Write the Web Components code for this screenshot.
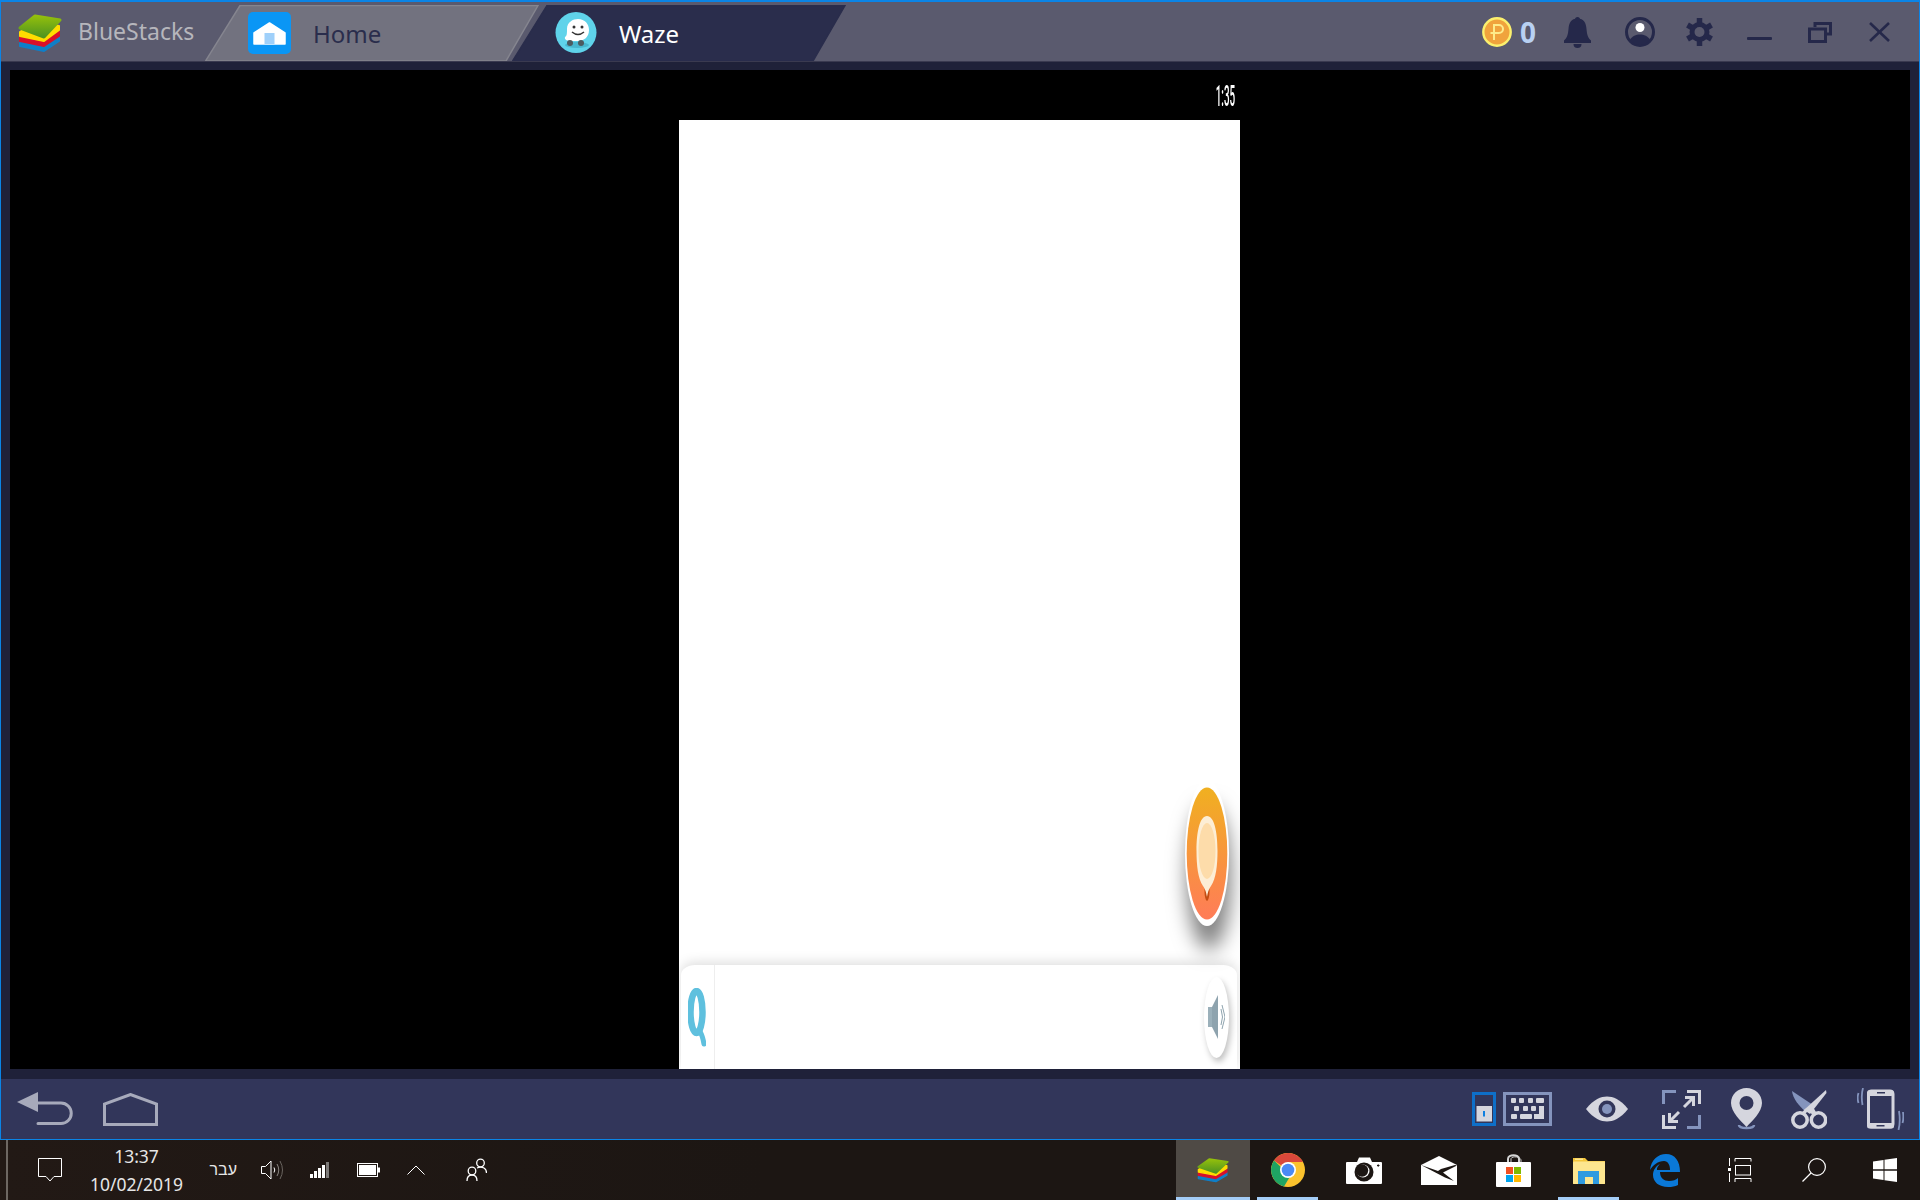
<!DOCTYPE html>
<html>
<head>
<meta charset="utf-8">
<title>BlueStacks</title>
<style>
  html, body { margin: 0; padding: 0; background: #1c1613; }
  body { width: 1920px; height: 1200px; overflow: hidden; display: flex; flex-direction: column; font-family: "Noto Sans", sans-serif; }
</style>
</head>
<body>
<bs-window>
  <bs-titlebar slot="title">
    <ui-icon slot="brand" name="bluestacks" w="44" h="39"></ui-icon>
    <bs-tab slot="tabs" kind="home" label="Home"><ui-icon name="homeapp" w="43" h="42"></ui-icon></bs-tab>
    <bs-tab slot="tabs" kind="app" label="Waze"><ui-icon name="waze" w="42" h="41"></ui-icon></bs-tab>
    <ui-icon slot="controls" name="coin" w="30" h="30"></ui-icon>
    <bs-count slot="controls" style="margin-left:8px">0</bs-count>
    <ui-icon slot="controls" name="bell" w="27" h="31" style="margin-left:29px"></ui-icon>
    <ui-icon slot="controls" name="user" w="30" h="30" style="margin-left:34px"></ui-icon>
    <ui-icon slot="controls" name="gear" w="27" h="28" style="margin-left:31px"></ui-icon>
    <ui-icon slot="controls" name="minimize" w="25" h="30" style="margin-left:34px"></ui-icon>
    <ui-icon slot="controls" name="restore" w="24" h="21" style="margin-left:36px"></ui-icon>
    <ui-icon slot="controls" name="close" w="21" h="20" style="margin-left:37px"></ui-icon>
  </bs-titlebar>
  <bs-stage slot="stage">
    <android-phone time="1:35"></android-phone>
  </bs-stage>
  <bs-toolbar slot="toolbar">
    <ui-icon slot="left" name="back" w="56" h="34"></ui-icon>
    <ui-icon slot="left" name="androidhome" w="55" h="33" style="margin-left:30px"></ui-icon>
    <ui-icon slot="right" name="switch" w="24" h="34"></ui-icon>
    <ui-icon slot="right" name="keyboard" w="49" h="34" style="margin-left:7px"></ui-icon>
    <ui-icon slot="right" name="eye" w="42" h="26" style="margin-left:34px"></ui-icon>
    <ui-icon slot="right" name="expand" w="39" h="39" style="margin-left:34px"></ui-icon>
    <ui-icon slot="right" name="pin" w="31" h="42" style="margin-left:30px"></ui-icon>
    <ui-icon slot="right" name="scissors" w="36" h="39" style="margin-left:29px"></ui-icon>
    <ui-icon slot="right" name="shake" w="47" h="42" style="margin-left:30px"></ui-icon>
  </bs-toolbar>
</bs-window>
<win-taskbar>
  <ui-icon slot="tray" name="message" w="24" h="24" style="margin-left:30px"></ui-icon>
  <win-clock slot="tray" style="margin-left:28px"></win-clock>
  <win-lang slot="tray" style="margin-left:24px">עבר</win-lang>
  <ui-icon slot="tray" name="speaker" w="23" h="22" style="margin-left:24px"></ui-icon>
  <ui-icon slot="tray" name="signal" w="19" h="16" style="margin-left:26px"></ui-icon>
  <ui-icon slot="tray" name="battery" w="23" h="14" style="margin-left:28px"></ui-icon>
  <ui-icon slot="tray" name="chevron" w="18" h="10" style="margin-left:27px"></ui-icon>
  <ui-icon slot="tray" name="people" w="21" h="24" style="margin-left:41px"></ui-icon>

  <task-item slot="apps" active running style="width:74px"><ui-icon name="bluestacks" w="32" h="25"></ui-icon></task-item>
  <task-item slot="apps" running style="width:76px"><ui-icon name="chrome" w="34" h="34"></ui-icon></task-item>
  <task-item slot="apps" style="width:75px"><ui-icon name="camera" w="36" h="27"></ui-icon></task-item>
  <task-item slot="apps" style="width:75px"><ui-icon name="mail" w="36" h="29"></ui-icon></task-item>
  <task-item slot="apps" style="width:75px"><ui-icon name="store" w="35" h="33"></ui-icon></task-item>
  <task-item slot="apps" running style="width:76px"><ui-icon name="explorer" w="32" h="27"></ui-icon></task-item>
  <task-item slot="apps" style="width:75px"><ui-icon name="edge" w="30" h="33"></ui-icon></task-item>
  <task-item slot="apps" style="width:76px"><ui-icon name="taskview" w="24" h="24"></ui-icon></task-item>
  <task-item slot="apps" style="width:71px"><ui-icon name="search" w="24" h="24"></ui-icon></task-item>
  <task-item slot="apps" style="width:71px"><ui-icon name="windows" w="24" h="24"></ui-icon></task-item>
</win-taskbar>

<script>
// light and blue-grey fills shared by the toolbar icons
const LT = "#d5d6de";
const BG = "#8494bd";
const BAR = "#32365a";
const NAVY = "#25284a";

const ICONS = {
  bluestacks: (w, h) => `
    <svg viewBox="0 0 44 39" width="${w}" height="${h}" preserveAspectRatio="none">
      <defs><linearGradient id="g" x1="0" y1="0" x2="0" y2="1"><stop offset="0" stop-color="#93bf0c"/><stop offset="1" stop-color="#4f9420"/></linearGradient></defs>
      <path d="M2 29 L17 18 L41 23 L41 27 L26 37 L2 32 Z" fill="#0f7fc8" stroke="#0f7fc8" stroke-width="2" stroke-linejoin="round"/>
      <path d="M2 23 L17 13 L41 18 L41 22 L26 32 L2 27 Z" fill="#d9102a" stroke="#d9102a" stroke-width="2" stroke-linejoin="round"/>
      <path d="M2 18 L17 8 L41 12 L41 16 L26 27 L2 22 Z" fill="#ffdd00" stroke="#ffdd00" stroke-width="2" stroke-linejoin="round"/>
      <path d="M2 14 L17 2 L42 6 L26 23 Z" fill="url(#g)" stroke="url(#g)" stroke-width="3" stroke-linejoin="round"/>
    </svg>`,
  homeapp: () => `
    <svg viewBox="0 0 43 42" width="43" height="42">
      <rect width="43" height="42" rx="5" fill="#0a96f5"/>
      <path d="M6 21 L21.500 11 L37 21 V32 H6 Z" fill="#fff" stroke="#fff" stroke-linejoin="round" stroke-width="1.500"/>
      <rect x="16.500" y="21" width="10" height="11" fill="#9fd0fa"/>
    </svg>`,
  waze: () => `
    <svg viewBox="0 0 42 41" width="42" height="41">
      <circle cx="21" cy="20.500" r="20.500" fill="#5fd3ea"/>
      <ellipse cx="22" cy="33" rx="12" ry="3" fill="#47b6cf"/>
      <path d="M10 25 C12 24 12 21 12 17 C12 10 18 7 23 7 C30 7 34 12 34 18 C34 25 29 29 23 29 H16 C13 29 9 28 10 25 Z" fill="#fff"/>
      <circle cx="19" cy="15" r="1.500" fill="#333"/><circle cx="27" cy="15" r="1.500" fill="#333"/>
      <path d="M17 20 Q23 25 29 20" fill="none" stroke="#333" stroke-width="1.500"/>
      <circle cx="15" cy="31" r="3" fill="#4c5a60"/><circle cx="26" cy="31" r="3" fill="#4c5a60"/>
    </svg>`,
  coin: () => `
    <svg viewBox="0 0 30 30" width="30" height="30">
      <circle cx="15" cy="15" r="13.700" fill="#f0a33c" stroke="#fbf06e" stroke-width="2.400"/>
      <path d="M12 23 V8 H17 A4 4 0 0 1 17 16 H8.500" fill="none" stroke="#fdeb8a" stroke-width="2"/>
    </svg>`,
  bell: () => `
    <svg viewBox="0 0 27 31" width="27" height="31" fill="${NAVY}">
      <circle cx="13.500" cy="2.500" r="2.500"/>
      <path d="M13.500 1.500 C20 1.500 22 6 22.500 12 C23 18 24 21 27 23.500 V26 H0 V23.500 C3 21 4 18 4.500 12 C5 6 7 1.500 13.500 1.500 Z"/>
      <path d="M9.500 27 H17.500 A4 4 0 0 1 9.500 27 Z"/>
    </svg>`,
  user: () => `
    <svg viewBox="0 0 30 30" width="30" height="30">
      <circle cx="15" cy="15" r="13.500" fill="none" stroke="${NAVY}" stroke-width="3"/>
      <circle cx="15" cy="10.500" r="4.500" fill="#fff"/>
      <path d="M5 23 C7 19 11 17.500 15 17.500 C19 17.500 23 19 25 23 C22 27 18 28 15 28 C12 28 8 27 5 23 Z" fill="${NAVY}"/>
    </svg>`,
  gear: () => `
    <svg viewBox="0 0 27 28" width="27" height="28">
      <g stroke="${NAVY}" stroke-width="5.500">
        <line x1="13.500" y1="0" x2="13.500" y2="28"/>
        <line x1="1.500" y1="7" x2="25.500" y2="21"/>
        <line x1="25.500" y1="7" x2="1.500" y2="21"/>
      </g>
      <circle cx="13.500" cy="14" r="10" fill="${NAVY}"/>
      <circle cx="13.500" cy="14" r="5" fill="#5a5a6e"/>
    </svg>`,
  minimize: () => `<svg viewBox="0 0 25 30" width="25" height="30"><rect x="0" y="20" width="25" height="3" rx="1" fill="${NAVY}"/></svg>`,
  restore: () => `
    <svg viewBox="0 0 24 21" width="24" height="21" fill="none" stroke="${NAVY}" stroke-width="3">
      <path d="M7 5 V1.500 H22.500 V12 H18"/>
      <rect x="1.500" y="7" width="16" height="12.500"/>
    </svg>`,
  close: () => `
    <svg viewBox="0 0 21 20" width="21" height="20" stroke="${NAVY}" stroke-width="2.600">
      <line x1="1" y1="1" x2="20" y2="19"/><line x1="20" y1="1" x2="1" y2="19"/>
    </svg>`,
  back: () => `
    <svg viewBox="0 0 56 34" width="56" height="34">
      <path d="M21 11 H44 A10.250 10.250 0 0 1 44 31.500 H21" fill="none" stroke="#a7aabb" stroke-width="3" stroke-linecap="round"/>
      <path d="M0 10 L21 0 V20 Z" fill="#a7aabb"/>
    </svg>`,
  androidhome: () => `
    <svg viewBox="0 0 55 33" width="55" height="33">
      <path d="M1.500 31.500 V11 L27.500 1.500 L53.500 11 V31.500 Z" fill="none" stroke="#a7aabb" stroke-width="3"/>
    </svg>`,
  switch: () => `
    <svg viewBox="0 0 24 34" width="24" height="34">
      <rect x="1.500" y="1.500" width="21" height="31" fill="none" stroke="#0e6fc8" stroke-width="3"/>
      <rect x="4.500" y="14" width="15.500" height="15.500" fill="${LT}"/>
      <rect x="11" y="19" width="2" height="5.500" fill="#0e7fe0"/>
    </svg>`,
  keyboard: () => `
    <svg viewBox="0 0 49 34" width="49" height="34" fill="${LT}">
      <rect x="1.500" y="1.500" width="46" height="31" fill="none" stroke="${BG}" stroke-width="3"/>
      <rect x="8" y="6" width="5" height="5" rx="1"/><rect x="16" y="6" width="5" height="5" rx="1"/><rect x="25" y="6" width="5" height="5" rx="1"/><rect x="33" y="6" width="8" height="5" rx="1"/>
      <rect x="11" y="14" width="5" height="5" rx="1"/><rect x="20" y="14" width="5" height="5" rx="1"/><rect x="28" y="14" width="5" height="5" rx="1"/>
      <rect x="8" y="22" width="6" height="5" rx="1"/><rect x="17" y="22" width="12" height="5" rx="1"/>
      <path d="M36 14 H41 V27 H31 V22 H36 Z"/>
    </svg>`,
  eye: () => `
    <svg viewBox="0 0 42 26" width="42" height="26">
      <path d="M0 13 C8 3 15 0.500 21 0.500 C27 0.500 34 3 42 13 C34 23 27 25.500 21 25.500 C15 25.500 8 23 0 13 Z" fill="${LT}"/>
      <circle cx="21" cy="13" r="8.500" fill="${BAR}"/>
      <circle cx="21" cy="13" r="5" fill="${BG}"/>
    </svg>`,
  expand: () => `
    <svg viewBox="0 0 39 39" width="39" height="39" fill="none" stroke-width="3">
      <path d="M14 1.500 H1.500 V14" stroke="${BG}"/>
      <path d="M25 1.500 H37.500 V14" stroke="${LT}"/>
      <path d="M1.500 25 V37.500 H14" stroke="${LT}"/>
      <path d="M37.500 25 V37.500 H25" stroke="${BG}"/>
      <path d="M22 17 L31 8 M23 7.500 H31.500 V16" stroke="${LT}"/>
      <path d="M17 22 L8 31 M16 31.500 H7.500 V23" stroke="${LT}"/>
    </svg>`,
  pin: () => `
    <svg viewBox="0 0 31 42" width="31" height="42">
      <path d="M8 37 C8 41 23 41 23 37" fill="none" stroke="${BG}" stroke-width="2.500"/>
      <path d="M15.500 0 C24 0 31 6.500 31 15 C31 24 21 33 15.500 39 C10 33 0 24 0 15 C0 6.500 7 0 15.500 0 Z" fill="${LT}"/>
      <circle cx="15.500" cy="15" r="7" fill="${BAR}"/>
    </svg>`,
  scissors: () => `
    <svg viewBox="0 0 36 39" width="36" height="39">
      <path d="M1 1 L22 15 L15 22 C8 16 2 9 1 1 Z" fill="${BG}"/>
      <path d="M35 0 L35.500 3 L19 24 L13 20 Z" fill="${LT}"/>
      <path d="M14 19 L21 15 L26 24 L23.500 26 Z M17 21 L13 25 L10.500 23 L14 19 Z" fill="${LT}"/>
      <circle cx="9" cy="30" r="7.200" fill="none" stroke="${LT}" stroke-width="3.500"/>
      <circle cx="27.500" cy="30" r="7.200" fill="none" stroke="${LT}" stroke-width="3.500"/>
    </svg>`,
  shake: () => `
    <svg viewBox="0 0 47 42" width="47" height="42" fill="none">
      <rect x="11.500" y="3" width="24.500" height="36" rx="3" stroke="${LT}" stroke-width="3" fill="${BAR}"/>
      <rect x="10" y="2" width="27" height="6" rx="3" fill="${LT}"/>
      <rect x="20" y="4" width="8" height="1.500" fill="${BAR}"/>
      <rect x="10" y="35" width="27" height="5.500" rx="2.500" fill="${LT}"/>
      <rect x="19.500" y="37" width="8" height="1.500" fill="${BAR}"/>
      <path d="M6 0 C4.500 5 4.500 11 5.500 17 M1.500 5 C0.500 8 0.500 12 1.500 15" stroke="${BG}" stroke-width="1.800"/>
      <path d="M41.500 42 C43 36 43 29 42 23 M46 24 C46.500 28 46.500 32 45.500 35" stroke="${BG}" stroke-width="1.800"/>
    </svg>`,
  message: () => `
    <svg viewBox="0 0 24 24" width="24" height="24" fill="none" stroke="#fff" stroke-width="1">
      <path d="M0.500 0.500 H23.500 V18.500 H16 L12 23 L8 18.500 H0.500 Z"/>
    </svg>`,
  speaker: () => `
    <svg viewBox="0 0 23 22" width="23" height="22" fill="none" stroke="#fff" stroke-width="1">
      <path d="M0.500 7.500 H4.500 L10 2 V20 L4.500 14.500 H0.500 Z"/>
      <path d="M13 8.500 Q14.500 11 13 13.500" />
      <path d="M16 5 Q19.500 11 16 17" stroke="#8a8580"/>
      <path d="M19 2 Q24 11 19 20" stroke="#6a6560"/>
    </svg>`,
  signal: () => `
    <svg viewBox="0 0 19 16" width="19" height="16" fill="#fff">
      <rect x="0" y="12" width="3" height="4"/><rect x="4" y="9" width="3" height="7"/><rect x="8" y="6" width="3" height="10"/><rect x="12" y="3" width="3" height="13"/><rect x="16" y="0" width="3" height="16" fill="#7d7a78"/>
    </svg>`,
  battery: () => `
    <svg viewBox="0 0 23 14" width="23" height="14">
      <rect x="0.500" y="0.500" width="20" height="13" fill="none" stroke="#fff"/>
      <rect x="2" y="2" width="17" height="10" fill="#fff"/>
      <rect x="21" y="4.500" width="2" height="5" fill="#fff"/>
    </svg>`,
  chevron: () => `<svg viewBox="0 0 18 10" width="18" height="10" fill="none" stroke="#fff"><path d="M0.500 9.500 L9 1 L17.500 9.500"/></svg>`,
  people: () => `
    <svg viewBox="0 0 21 24" width="21" height="24" fill="none" stroke="#fff" stroke-width="1.300">
      <circle cx="14.500" cy="5" r="3.800"/>
      <circle cx="6" cy="13" r="3.800"/>
      <path d="M1 23 C1 19 3 17 6 17 C9 17 11 19 11 23"/>
      <path d="M11 10 C13 9 16 9 18 10 C20 11 20.500 13 20.500 15"/>
    </svg>`,
  chrome: () => `
    <svg viewBox="0 0 34 34" width="34" height="34">
      <circle cx="17" cy="17" r="17" fill="#fbc22d"/>
      <path d="M17 17 L3 7.500 A17 17 0 0 1 32 9 L17 9 Z" fill="#d9483b"/>
      <path d="M3 7.500 A17 17 0 0 0 13 33.500 L20.500 21 L13 17 Z" fill="#1fa463"/>
      <circle cx="17" cy="17" r="8" fill="#fff"/>
      <circle cx="17" cy="17" r="6.300" fill="#4b8af5"/>
    </svg>`,
  camera: () => `
    <svg viewBox="0 0 36 27" width="36" height="27">
      <path d="M1 5 H11 L13 0.500 H24 L26 5 H35 A1 1 0 0 1 36 6 V26 A1 1 0 0 1 35 27 H1 A1 1 0 0 1 0 26 V6 A1 1 0 0 1 1 5 Z" fill="#fff"/>
      <circle cx="18" cy="15" r="9.500" fill="#1c1613"/>
      <circle cx="17" cy="14" r="6.500" fill="#fff"/>
      <circle cx="16" cy="13.500" r="6.200" fill="#1c1613"/>
      <rect x="31" y="8" width="2.500" height="1" fill="#1c1613"/><rect x="31.700" y="7.300" width="1" height="2.500" fill="#1c1613"/>
    </svg>`,
  mail: () => `
    <svg viewBox="0 0 36 29" width="36" height="29">
      <path d="M0 9 L18 0 L36 9 V29 H0 Z" fill="#fff"/>
      <path d="M0 9 L24 21.500 L33 25 L22 16.500 L36 9.500 L34 9 L20 13 L17 15 Z" fill="#1c1613"/>
    </svg>`,
  store: () => `
    <svg viewBox="0 0 35 33" width="35" height="33">
      <path d="M12 9 V5 C12 0 23 0 23 5 V9" fill="none" stroke="#d5d5d5" stroke-width="2"/>
      <path d="M15 9 V5 C15 2 24 2 25 6 V9" fill="none" stroke="#d5d5d5" stroke-width="1"/>
      <rect x="0" y="8" width="35" height="25" rx="1" fill="#fff"/>
      <rect x="10" y="13" width="7" height="7" fill="#f25022"/><rect x="18" y="13" width="7" height="7" fill="#7fba00"/>
      <rect x="10" y="21" width="7" height="7" fill="#00a4ef"/><rect x="18" y="21" width="7" height="7" fill="#ffb900"/>
    </svg>`,
  explorer: () => `
    <svg viewBox="0 0 32 27" width="32" height="27">
      <path d="M0 1 H12 L15 4 H32 V27 H0 Z" fill="#f4c63a"/>
      <rect x="0" y="4.500" width="32" height="22.500" rx="1" fill="#fde68f"/>
      <rect x="2" y="1.500" width="8" height="1.500" fill="#fde68f"/>
      <path d="M5 14 H26 V27 H20 V20 H12 V27 H5 Z" fill="#2f9be0"/>
    </svg>`,
  edge: () => `
    <svg viewBox="0 0 30 33" width="30" height="33">
      <path d="M0 16 C1 6 8 0 16 0 C25 0 30 7 30 18 H10 C10 24 14 27 19 27 C23 27 26 26 28 24 V31 C25 32.500 22 33 18 33 C9 33 3 28 3 21 C3 16 6 12 10 10 C7 13 7 14 7 16 L20 16 C20 11 18 7 14 7 C8 7 3 11 0 16 Z" fill="#0a78d7"/>
    </svg>`,
  taskview: () => `
    <svg viewBox="0 0 24 24" width="24" height="24" fill="none" stroke="#fff">
      <path d="M7 0.500 H23 M7 3.500 V0.500 M23 0.500 V3.500"/>
      <rect x="7.500" y="7.500" width="15" height="9.500"/>
      <path d="M7 24 V20.500 H23 V24"/>
      <rect x="0" y="10" width="3" height="3" fill="#fff" stroke="none"/>
      <path d="M1.500 0 V8 M1.500 15 V24" />
    </svg>`,
  search: () => `
    <svg viewBox="0 0 24 24" width="24" height="24" fill="none" stroke="#fff" stroke-width="1.200">
      <circle cx="15" cy="9" r="8.400"/>
      <line x1="9" y1="15" x2="0.500" y2="23.500"/>
    </svg>`,
  windows: () => `
    <svg viewBox="0 0 24 24" width="24" height="24" fill="#fff">
      <path d="M0 3.500 L10.500 2 V11.300 H0 Z M11.500 1.800 L24 0 V11.300 H11.500 Z M0 12.700 H10.500 V22 L0 20.500 Z M11.500 12.700 H24 V24 L11.500 22.200 Z"/>
    </svg>`,
  q: () => `
    <svg viewBox="0 0 18 59" width="18" height="59" fill="none" stroke="#5fc0de" stroke-linecap="round">
      <ellipse cx="8.500" cy="24" rx="6" ry="21" stroke-width="6.500"/>
      <path d="M11 42 C14 46 15 50 16 56" stroke-width="5"/>
    </svg>`,
  sound: () => `
    <svg viewBox="0 0 17 44" width="17" height="44">
      <rect x="0" y="12" width="4" height="20" fill="#9bb0ba"/>
      <path d="M4 12 L10 0 V44 L4 32 Z" fill="#8ea3ae"/>
      <path d="M13 14 Q16 22 13 30 M14 10 L17 22 L14 34" fill="none" stroke="#8ea3ae" stroke-width="1"/>
    </svg>`,
  fab: () => `
    <svg viewBox="0 0 44 145" width="44" height="145">
      <defs><linearGradient id="o" x1="0" y1="0" x2="0" y2="1"><stop offset="0" stop-color="#f0b020"/><stop offset="1" stop-color="#ff7c58"/></linearGradient></defs>
      <ellipse cx="22" cy="72.500" rx="22" ry="72.500" fill="#fff"/>
      <ellipse cx="22" cy="72.500" rx="20.300" ry="66" fill="url(#o)"/>
      <ellipse cx="22" cy="110" rx="2.500" ry="10" fill="#c34c12"/>
      <path d="M22 116 C21 110 20 108 18 105 C13 98 11.500 84 11.500 70 C11.500 50 15 35 22 35 C29 35 32.500 50 32.500 70 C32.500 84 31 98 26 105 C24 108 23 110 22 116 Z" fill="#fdeed5"/>
      <ellipse cx="22" cy="70" rx="8.500" ry="28" fill="#fddcaa"/>
    </svg>`,
};

class UiIcon extends HTMLElement {
  constructor() {
    super();
    const w = this.getAttribute("w");
    const h = this.getAttribute("h");
    const draw = ICONS[this.getAttribute("name")];
    this.attachShadow({ mode: "open" }).innerHTML = `
      <style>
        :host { display: inline-flex; flex: none; width: ${w}px; height: ${h}px; }
        svg { display: block; }
      </style>
      ${draw(w, h)}`;
  }
}

class BsWindow extends HTMLElement {
  constructor() {
    super();
    this.attachShadow({ mode: "open" }).innerHTML = `
      <style>
        :host {
          display: flex; flex-direction: column; flex: none;
          height: 1140px; box-sizing: border-box;
          border: 1px solid #0a84e6; border-top-width: 2px;
          background: #1f2139;
        }
      </style>
      <slot name="title"></slot>
      <slot name="stage"></slot>
      <slot name="toolbar"></slot>`;
  }
}

class BsTitlebar extends HTMLElement {
  constructor() {
    super();
    this.attachShadow({ mode: "open" }).innerHTML = `
      <style>
        :host {
          display: flex; flex: none; height: 60px; box-sizing: border-box;
          background: #5a5a6e; border-bottom: 1px solid #3a3a50;
        }
        .brand { display: flex; align-items: center; width: 204px; height: 59px; padding-left: 17px; padding-top: 3px; box-sizing: border-box; flex: none; }
        .name { margin-left: 16px; margin-top: -4px; font: 23px "Noto Sans", sans-serif; color: #b6b6bc; }
        .tabs { display: flex; align-items: flex-end; flex: none; }
        .controls { display: flex; align-items: center; margin-left: auto; padding-right: 29px; padding-top: 1px; }
      </style>
      <div class="brand"><slot name="brand"></slot><span class="name">BlueStacks</span></div>
      <div class="tabs"><slot name="tabs"></slot></div>
      <div class="controls"><slot name="controls"></slot></div>`;
  }
}

class BsTab extends HTMLElement {
  constructor() {
    super();
    const isHome = this.getAttribute("kind") === "home";
    const fill = isHome ? "#72727f" : "#2a2d4c";
    const edge = isHome ? "#85858f" : "#2a2d4c";
    const color = isHome ? "#2a2d4c" : "#fff";
    this.attachShadow({ mode: "open" }).innerHTML = `
      <style>
        :host {
          display: flex; align-items: center; position: relative;
          width: 334px; height: 56px; box-sizing: border-box; flex: none;
          margin-right: -27px; padding-left: 43px; padding-bottom: 1px;
          color: ${color}; font: 24px "Noto Sans", sans-serif;
        }
        .shape { position: absolute; inset: 0; }
        ::slotted(ui-icon) { position: relative; }
        span { position: relative; margin-left: 22px; top: 1px; }
      </style>
      <svg class="shape" viewBox="0 0 334 56" width="334" height="56">
        <path d="M0.500 56 L35 0.500 H333 L301 56 Z" fill="${fill}" stroke="${edge}" stroke-width="1.500"/>
      </svg>
      <slot></slot>
      <span>${this.getAttribute("label")}</span>`;
  }
}

class BsCount extends HTMLElement {
  constructor() {
    super();
    this.attachShadow({ mode: "open" }).innerHTML = `
      <style>:host { display: block; width: 15px; font: 700 28px "Noto Sans", sans-serif; color: #b8d0f2; line-height: 30px; }</style>
      <slot></slot>`;
  }
}

class BsStage extends HTMLElement {
  constructor() {
    super();
    this.attachShadow({ mode: "open" }).innerHTML = `
      <style>
        :host { display: flex; flex: none; height: 1017px; box-sizing: border-box; padding: 8px 9px 10px 9px; }
        .screen { flex: 1; background: #000; display: flex; justify-content: center; }
      </style>
      <div class="screen"><slot></slot></div>`;
  }
}

class AndroidPhone extends HTMLElement {
  constructor() {
    super();
    this.attachShadow({ mode: "open" }).innerHTML = `
      <style>
        :host { display: flex; flex-direction: column; width: 561px; height: 999px; flex: none; margin-right: 1px; }
        .status { height: 50px; flex: none; display: flex; justify-content: flex-end; align-items: center; padding-right: 5px; }
        .time { color: #fff; font: 500 29px Roboto, sans-serif; transform: scaleX(0.34); transform-origin: right center; margin-top: 2px; }
        .map { flex: 1; background: #fff; display: flex; flex-direction: column; justify-content: flex-end; overflow: hidden; }
        .fab { align-self: flex-end; display: flex; margin: 0 11px 39px 0; filter: drop-shadow(2px 24px 10px rgba(0,0,0,.5)); }
        .bar { height: 104px; flex: none; display: flex; align-items: center; background: #fff; margin: 0 3px 0 2px; border-radius: 14px 14px 0 0 / 10px 10px 0 0; box-shadow: 0 -3px 12px rgba(0,0,0,.13); }
        .find { width: 34px; align-self: stretch; flex: none; display: flex; align-items: center; padding-left: 7px; box-sizing: border-box; border-right: 1px solid #eee; }
        .mute { margin-left: auto; margin-right: 8px; width: 25px; height: 81px; border-radius: 50%; background: #fff; box-shadow: 2px 4px 6px rgba(0,0,0,.25); display: flex; align-items: center; justify-content: center; }
      </style>
      <div class="status"><span class="time">${this.getAttribute("time")}</span></div>
      <div class="map">
        <div class="fab"><ui-icon name="fab" w="44" h="145"></ui-icon></div>
        <div class="bar">
          <div class="find"><ui-icon name="q" w="18" h="59"></ui-icon></div>
          <div class="mute"><ui-icon name="sound" w="17" h="44"></ui-icon></div>
        </div>
      </div>`;
  }
}

class BsToolbar extends HTMLElement {
  constructor() {
    super();
    this.attachShadow({ mode: "open" }).innerHTML = `
      <style>
        :host { display: flex; flex: none; height: 60px; align-items: center; background: ${BAR}; }
        .left { display: flex; align-items: center; padding-left: 16px; }
        .right { display: flex; align-items: center; margin-left: auto; padding-right: 15px; }
      </style>
      <div class="left"><slot name="left"></slot></div>
      <div class="right"><slot name="right"></slot></div>`;
  }
}

class WinTaskbar extends HTMLElement {
  constructor() {
    super();
    this.attachShadow({ mode: "open" }).innerHTML = `
      <style>
        :host {
          display: flex; flex: 1; height: 60px; align-items: stretch;
          background: linear-gradient(90deg, #221915, #1c1613 40%, #1c1613);
          color: #fff; position: relative;
        }
        .tray { display: flex; align-items: center; border-left: 2px solid #6d6762; margin-left: 6px; }
        .apps { display: flex; margin-left: auto; }
      </style>
      <div class="tray"><slot name="tray"></slot></div>
      <div class="apps"><slot name="apps"></slot></div>`;
  }
}

class WinClock extends HTMLElement {
  constructor() {
    super();
    this.attachShadow({ mode: "open" }).innerHTML = `
      <style>
        :host { display: flex; flex-direction: column; align-items: center; gap: 8px; font: 17.500px/20px "Noto Sans", sans-serif; color: #e6e6e6; width: 93px; white-space: nowrap; }
      </style>
      <span>13:37</span><span>10/02/2019</span>`;
  }
}

class WinLang extends HTMLElement {
  constructor() {
    super();
    this.attachShadow({ mode: "open" }).innerHTML = `
      <style>:host { display: block; font: 16px "Liberation Sans", sans-serif; color: #e6e6e6; direction: rtl; width: 30px; }</style>
      <slot></slot>`;
  }
}

class TaskItem extends HTMLElement {
  constructor() {
    super();
    const active = this.hasAttribute("active");
    const running = this.hasAttribute("running");
    this.attachShadow({ mode: "open" }).innerHTML = `
      <style>
        :host {
          display: flex; align-items: center; justify-content: center; flex: none;
          height: 60px; position: relative; background: ${active ? "#4f4a45" : "transparent"};
        }
        .line { position: absolute; bottom: 0; height: 3px; background: #a4cdf7; left: ${active ? 0 : 7}px; right: ${active ? 0 : 8}px; }
      </style>
      <slot></slot>
      ${running ? '<div class="line"></div>' : ""}`;
  }
}

customElements.define("ui-icon", UiIcon);
customElements.define("bs-window", BsWindow);
customElements.define("bs-titlebar", BsTitlebar);
customElements.define("bs-tab", BsTab);
customElements.define("bs-count", BsCount);
customElements.define("bs-stage", BsStage);
customElements.define("android-phone", AndroidPhone);
customElements.define("bs-toolbar", BsToolbar);
customElements.define("win-taskbar", WinTaskbar);
customElements.define("win-clock", WinClock);
customElements.define("win-lang", WinLang);
customElements.define("task-item", TaskItem);
</script>
</body>
</html>
